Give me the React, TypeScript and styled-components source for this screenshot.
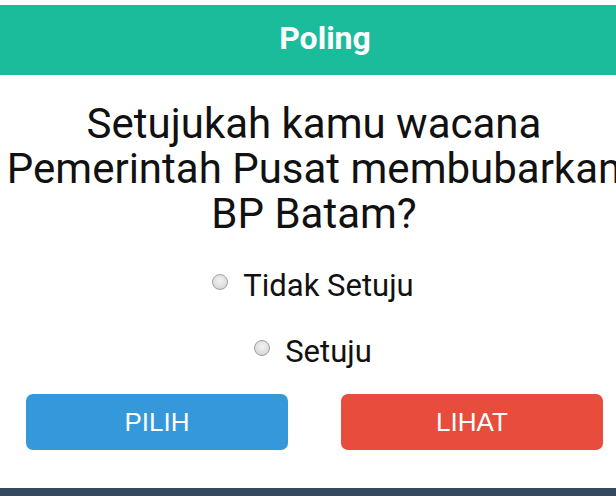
import React from 'react'
import styled, { createGlobalStyle } from 'styled-components'

const GlobalStyle = createGlobalStyle`
  html, body {
    margin: 0;
    padding: 0;
    background: #ffffff;
    overflow: hidden;
  }
`

const Widget = styled.div`
  width: 616px;
  height: 496px;
  padding-top: 5px;
  box-sizing: border-box;
  display: flex;
  flex-direction: column;
  overflow: hidden;
  font-family: Roboto, 'Noto Sans', sans-serif;
`

const Header = styled.div`
  height: 70px;
  box-sizing: border-box;
  background: #1abc9c;
  color: #ffffff;
  display: flex;
  align-items: center;
  justify-content: center;
  padding: 0 0 4px 34px;
  font-size: 32px;
  font-weight: 700;
`

const Question = styled.h2`
  margin: 26px -20px 0 -8px;
  font-size: 42px;
  font-weight: 400;
  line-height: 45px;
  text-align: center;
  color: #111111;
  white-space: nowrap;
`

const Options = styled.div`
  display: flex;
  flex-direction: column;
  align-items: center;
  gap: 30px;
  margin-top: 32px;
`

const Option = styled.label`
  display: flex;
  align-items: center;
  gap: 15px;
  font-size: 31px;
  line-height: 36px;
  color: #111111;
`

const Radio = styled.span`
  width: 16px;
  height: 16px;
  margin: -8px 0 0 10px;
  border-radius: 50%;
  box-sizing: border-box;
  border: 1px solid #a0a0a0;
  background: radial-gradient(circle at 50% 40%, #f4f4f4 0%, #dcdcdc 65%, #c2c2c2 100%);
`

const Actions = styled.div`
  display: flex;
  justify-content: space-between;
  padding: 0 13px 0 26px;
  margin-top: 24px;
`

const Button = styled.button<{ $tone: string }>`
  width: 262px;
  height: 56px;
  border: none;
  border-radius: 7px;
  background: ${({ $tone }) => $tone};
  color: #ffffff;
  font-family: 'Liberation Sans', Arial, sans-serif;
  font-size: 26px;
`

const Footer = styled.div`
  margin-top: auto;
  height: 8px;
  background: #34495e;
`

const App: React.FC = () => {
  return (
    <>
      <GlobalStyle />
      <Widget>
        <Header>Poling</Header>
        <Question>
          Setujukah kamu wacana
          <br />
          Pemerintah Pusat membubarkan
          <br />
          BP Batam?
        </Question>
        <Options>
          <Option>
            <Radio />
            Tidak Setuju
          </Option>
          <Option>
            <Radio />
            Setuju
          </Option>
        </Options>
        <Actions>
          <Button $tone="#3498db">PILIH</Button>
          <Button $tone="#e74c3c">LIHAT</Button>
        </Actions>
        <Footer />
      </Widget>
    </>
  )
}

export default App
